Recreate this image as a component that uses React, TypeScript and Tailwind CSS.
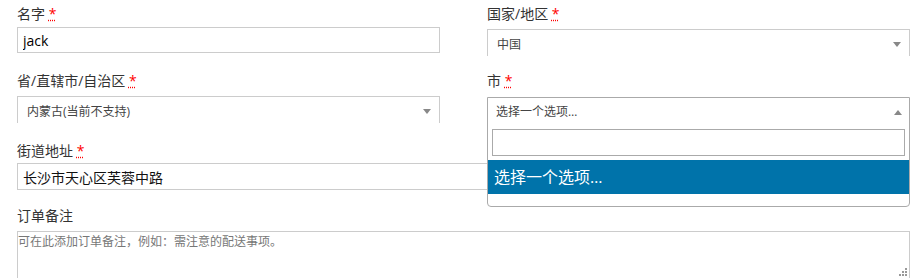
import React from 'react';

const fontStack = '"Open Sans", "Noto Sans CJK SC", sans-serif';

function Label({ text, required = true }: { text: string; required?: boolean }) {
  return (
    <label className="block h-[22px] leading-[22px] text-[14px] text-[#333]">
      {text}
      {required && (
        <>
          {' '}
          <abbr title="必填" className="text-[#f00] cursor-help">
            *
          </abbr>
        </>
      )}
    </label>
  );
}

function Arrow({ up = false }: { up?: boolean }) {
  return up ? (
    <span className="w-0 h-0 border-x-[4px] border-x-transparent border-b-[5px] border-b-[#888]" />
  ) : (
    <span className="w-0 h-0 border-x-[4px] border-x-transparent border-t-[5px] border-t-[#888]" />
  );
}

function SelectBox({ value, mt }: { value: string; mt: string }) {
  return (
    <div
      className={`${mt} h-[27px] border-t border-x border-[#ccc] flex items-center justify-between pt-[3px] pl-[9px] pr-[8px] text-[12px] text-[#444]`}
    >
      <span>{value}</span>
      <Arrow />
    </div>
  );
}

export default function App() {
  return (
    <div
      className="w-[919px] h-[278px] overflow-hidden bg-white pl-[17px]"
      style={{ fontFamily: fontStack }}
    >
      <div className="grid grid-cols-[423px_423px] gap-x-[47px]">
        {/* row 1 */}
        <div className="h-[53px] pt-[3px]">
          <Label text="名字" />
          <input
            defaultValue="jack"
            className="mt-[2px] w-full h-[26px] border border-[#ccc] px-[5px] text-[14px] text-black outline-none"
          />
        </div>
        <div className="h-[53px] pt-[3px]">
          <Label text="国家/地区" />
          <SelectBox value="中国" mt="mt-[4px]" />
        </div>

        {/* row 2 */}
        <div className="h-[70px] pt-[17px]">
          <Label text="省/直辖市/自治区" />
          <SelectBox value="内蒙古(当前不支持)" mt="mt-[4px]" />
        </div>
        <div className="h-[70px] pt-[17px] relative">
          <Label text="市" />
          <div className="absolute left-0 top-[44px] z-10 w-[423px] h-[110px] bg-white border border-[#aaa] rounded-b-[4px]">
            <div className="h-[28px] flex items-center justify-between pl-[8px] pr-[7px] text-[12px] text-[#444]">
              <span>选择一个选项…</span>
              <Arrow up />
            </div>
            <div className="px-[4px] pt-[3px]">
              <input className="w-full h-[27px] border border-[#aaa] outline-none px-[4px] text-[14px]" />
            </div>
            <div className="mt-[4px] h-[34px] bg-[#0073aa] text-white text-[16px] flex items-center pl-[6px]">
              选择一个选项…
            </div>
          </div>
        </div>

        {/* row 3 */}
        <div className="col-span-2 h-[67px] pt-[17px]">
          <Label text="街道地址" />
          <input
            defaultValue="长沙市天心区芙蓉中路"
            className="mt-[1px] w-full h-[27px] border border-[#ccc] px-[5px] text-[14px] text-[#111] outline-none"
          />
        </div>

        {/* row 4 */}
        <div className="col-span-2 pt-[15px]">
          <Label text="订单备注" required={false} />
          <div className="relative mt-[4px]">
            <textarea
              placeholder="可在此添加订单备注，例如：需注意的配送事项。"
              className="block w-full h-[50px] border border-[#ccc] px-0 pt-[1px] text-[12px] leading-[18px] resize-none outline-none placeholder:text-[#777]"
            />
            <svg className="absolute right-[3px] top-[37px]" width="8" height="8" viewBox="0 0 8 8">
              <rect x="6" y="0" width="2" height="2" fill="#999" />
              <rect x="3" y="3" width="2" height="2" fill="#999" />
              <rect x="6" y="3" width="2" height="2" fill="#999" />
              <rect x="0" y="6" width="2" height="2" fill="#999" />
              <rect x="3" y="6" width="2" height="2" fill="#999" />
              <rect x="6" y="6" width="2" height="2" fill="#999" />
            </svg>
          </div>
        </div>
      </div>
    </div>
  );
}
